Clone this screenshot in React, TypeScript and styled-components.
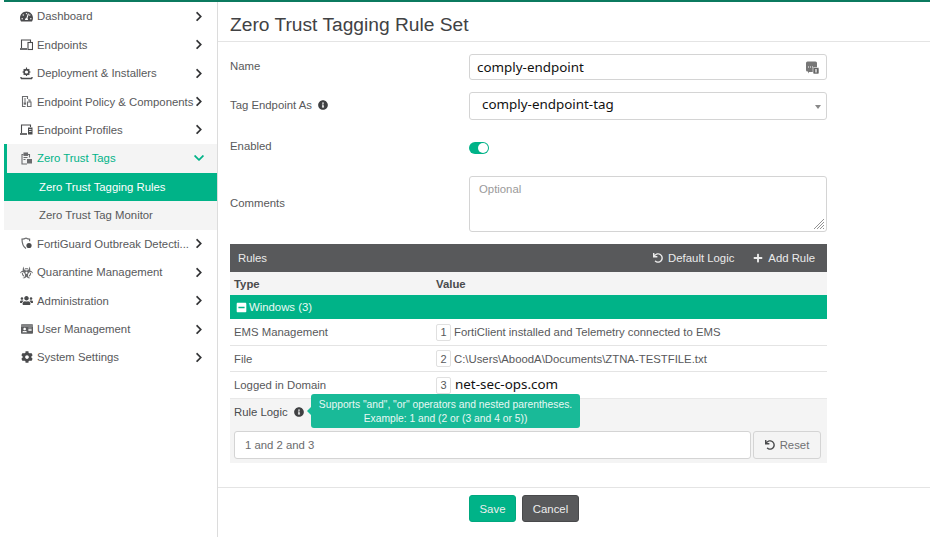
import React from "react";
import styled, { createGlobalStyle } from "styled-components";
import {
  FaTachometerAlt, FaChevronRight, FaChevronDown, FaInfoCircle, FaUndo, FaPlus, FaMinusSquare,
  FaUsers, FaCog, FaBiohazard, FaIdCard,
} from "react-icons/fa";

const Global = createGlobalStyle`
  html, body { margin: 0; padding: 0; background: #fff; }
  body { font-family: "Liberation Sans", Arial, sans-serif; font-size: 11.35px; color: #58595b; }
`;

const Page = styled.div`
  width: 926px; height: 537px; margin-left: 4px; display: flex; flex-direction: column; overflow: hidden;
`;
const TopBar = styled.div`height: 2px; background: #0b7a5f; flex: none;`;
const Body = styled.div`flex: 1; display: flex; min-height: 0;`;
const Sidebar = styled.nav`
  width: 213px; flex: none; border-right: 1px solid #dcdcdc; padding-top: 0;
`;
const NavRow = styled.div<{ $active?: boolean }>`
  height: 28.45px; display: flex; align-items: center; box-sizing: border-box;
  padding-left: ${p => (p.$active ? 13 : 16)}px; padding-right: 13px;
  background: ${p => (p.$active ? "#f4f4f4" : "transparent")};
  border-left: ${p => (p.$active ? "3px solid #00b388" : "0")};
  color: ${p => (p.$active ? "#00b388" : "#58595b")};
`;
const NavIcon = styled.span`
  width: 13px; height: 13px; margin-right: 4px; display: flex; align-items: center; justify-content: center; color: #4a4b4d; flex: none;
  svg { display: block; }
`;
const NavLabel = styled.span`flex: 1; white-space: nowrap; overflow: hidden;`;
const Chevron = styled.span<{ $open?: boolean }>`
  width: 10px; display: flex; justify-content: center; color: ${p => (p.$open ? "#00b388" : "#333436")}; flex: none;
`;
const SubRow = styled.div<{ $selected?: boolean }>`
  height: 28.45px; display: flex; align-items: center; padding-left: 35px;
  background: ${p => (p.$selected ? "#00b388" : "#f4f4f4")};
  color: ${p => (p.$selected ? "#fff" : "#58595b")};
`;
const Main = styled.main`flex: 1; min-width: 0; display: flex; flex-direction: column;`;
const Title = styled.h1`
  margin: 0; height: 40px; box-sizing: border-box; border-bottom: 1px solid #e4e4e4;
  padding: 12px 0 0 12px; font-weight: 400; font-size: 19.2px; line-height: 22px; color: #414244;
`;
const Content = styled.div`padding: 12px 0 0 12px; width: 597px; box-sizing: content-box;`;
const FormRow = styled.div<{ $gap?: number }>`
  display: grid; grid-template-columns: 239px 358px; align-items: center; margin-bottom: ${p => p.$gap ?? 12}px;
`;
const FieldLabel = styled.label`display: flex; align-items: center; gap: 6px; padding-bottom: 3px; color: #58595b;`;
const Field = styled.div<{ $h: number }>`
  height: ${p => p.$h}px; box-sizing: border-box; border: 1px solid #d4d4d4; border-radius: 3px; background: #fff;
  display: flex; align-items: center; position: relative;
`;
const Typed = styled.span<{ $pad: number; $lift?: number }>`
  font-family: "Noto Sans", sans-serif; font-size: 13.4px; color: #111; padding-left: ${p => p.$pad}px; flex: 1;
  margin-top: ${p => -(p.$lift ?? 0)}px;
`;
const FieldIcon = styled.span`position: absolute; right: 6px; top: 5px; display: flex;`;
const Caret = styled.span`
  position: absolute; right: 5px; top: 12px; width: 0; height: 0;
  border-left: 3px solid transparent; border-right: 3px solid transparent; border-top: 4px solid #888;
`;
const Toggle = styled.div`
  width: 20px; height: 12px; border-radius: 6px; background: #00b388; position: relative;
  &::after { content: ""; position: absolute; right: 1px; top: 1px; width: 10px; height: 10px; border-radius: 50%; background: #fff; }
`;
const Comment = styled.div`
  height: 56px; box-sizing: border-box; border: 1px solid #d4d4d4; border-radius: 3px; padding: 6px 9px; color: #9a9a9a; position: relative;
`;
const Grip = styled.svg`position: absolute; right: 1px; bottom: 1px;`;
const RulesBar = styled.div`
  height: 28px; background: #58595b; color: #ebebeb; display: flex; align-items: center; padding: 0 12px 0 8px;
`;
const RulesTitle = styled.span`flex: 1;`;
const BarAction = styled.span`display: inline-flex; align-items: center; gap: 5px; margin-left: 19px;`;
const Cols = styled.div`
  display: grid; grid-template-columns: 202px 1fr; height: 23px; align-items: center; background: #f4f4f4;
  padding-left: 4px; font-weight: 700; color: #4a4b4d;
`;
const Group = styled.div`
  height: 24px; background: #00b388; color: #eafaf5; display: flex; align-items: center; gap: 2px; padding-left: 6px;
`;
const Row = styled.div<{ $h: number; $last?: boolean }>`
  display: grid; grid-template-columns: 202px 1fr; height: ${p => p.$h}px; box-sizing: border-box; align-items: center; padding-left: 4px;
  border-bottom: ${p => (p.$last ? "0" : "1px solid #e4e4e4")}; white-space: nowrap;
`;
const Value = styled.div`display: flex; align-items: center; gap: 3px;`;
const Badge = styled.span`
  width: 15px; height: 17px; box-sizing: border-box; border: 1px solid #e0e0e0; border-radius: 2px; background: #fff;
  display: flex; align-items: center; justify-content: center; font-size: 11px; color: #58595b;
`;
const DomainText = styled.span`
  font-family: "Noto Sans", sans-serif; font-size: 13.4px; color: #111; line-height: 16px; margin: -3px 0 0 1px;
`;
const LogicPanel = styled.div`
  height: 65px; box-sizing: border-box; background: #f4f4f4; border-top: 1px solid #e8e8e8; padding: 0 6px 0 4px; position: relative;
`;
const LogicLabel = styled.div`
  height: 32px; display: flex; align-items: center; gap: 6px; color: #4a4b4d; padding: 1px 0 7px; box-sizing: border-box;
`;
const LogicRow = styled.div`display: flex; gap: 2px;`;
const LogicInput = styled.div`
  flex: 1; height: 28px; box-sizing: border-box; border: 1px solid #d4d4d4; border-radius: 3px; background: #fff;
  display: flex; align-items: center; padding-left: 10px; color: #6a6b6d;
`;
const ResetButton = styled.div`
  width: 68px; height: 28px; box-sizing: border-box; border: 1px solid #d4d4d4; border-radius: 3px; background: #f4f4f4;
  display: flex; align-items: center; justify-content: center; gap: 5px; color: #707173;
`;
const Tip = styled.div`
  position: absolute; left: 81px; top: -5px; width: 269px; height: 34px; background: #19ba98; color: #e8f8f4; border-radius: 3px;
  font-size: 10.3px; line-height: 14px; text-align: center; padding-top: 4px; box-sizing: border-box; white-space: nowrap;
  &::before {
    content: ""; position: absolute; left: -4px; top: 13px; border-top: 4px solid transparent; border-bottom: 4px solid transparent; border-right: 4px solid #19ba98;
  }
`;
const Footer = styled.div`
  margin-top: 24px; border-top: 1px solid #e4e4e4; padding: 7px 0 0 251px; display: flex; gap: 6px;
`;
const Btn = styled.button<{ $primary?: boolean }>`
  height: 27px; width: ${p => (p.$primary ? 47 : 57)}px; border: 1px solid ${p => (p.$primary ? "#00a87f" : "#48494b")}; border-radius: 3px;
  background: ${p => (p.$primary ? "#00b388" : "#58595b")}; color: #eee; font: 11.4px "Liberation Sans", Arial, sans-serif; padding: 0;
`;

const Laptop = () => (
  <svg width="13" height="13" viewBox="0 0 13 13" fill="none" stroke="currentColor" strokeWidth="1.1">
    <path d="M1.500 10V2h9v2" /><path d="M0 11h7" strokeWidth="1.600" /><rect x="8" y="4.500" width="4.500" height="7" />
  </svg>
);
const Deploy = () => (
  <svg width="13" height="13" viewBox="0 0 13 13" fill="none" stroke="currentColor">
    <circle cx="6.500" cy="5" r="2.400" strokeWidth="1.600" />
    <path d="M6.500 0.500v1.500M6.500 8v1M2.500 5H4M9 5h1.500M3.700 2.200l1 1M8.300 6.800l1 1M9.300 2.200l-1 1M4.700 6.800l-1 1" strokeWidth="1.100" />
    <path d="M1 11.500h11M1 11.500V10M12 11.500V10" strokeWidth="1.400" />
  </svg>
);
const Policy = () => (
  <svg width="13" height="13" viewBox="0 0 13 13" fill="none" stroke="#6b6c6e" strokeWidth="1.100">
    <path d="M7.500 4V1.500h-5v10h3" /><path d="M4 4h2M4 6h2" /><rect x="3.700" y="7.300" width="2.400" height="2.400" fill="#6b6c6e" stroke="none" />
    <path d="M7.500 7h3.500v4.500H7.500z" /><path d="M8 5h2v2" />
  </svg>
);
const Profile = () => (
  <svg width="13" height="13" viewBox="0 0 13 13" fill="none" stroke="currentColor" strokeWidth="1.100">
    <path d="M1.500 10V2h9v2" /><path d="M0 11h7" strokeWidth="1.600" /><rect x="8" y="4.500" width="4.500" height="7" fill="currentColor" stroke="none" />
    <path d="M9 6.500h2.500M9 8.500h2.500" stroke="#fff" strokeWidth=".8" />
  </svg>
);
const Clip = () => (
  <svg width="13" height="13" viewBox="0 0 13 13" fill="none" stroke="#6b6c6e" strokeWidth="1.100">
    <path d="M3.500 2.500h-1.500v9.500h5" /><path d="M8 2.500h1.500v3" /><rect x="4" y="1" width="3.500" height="2.400" fill="#6b6c6e" />
    <path d="M3.500 5.500h4M3.500 7.500h2" /><rect x="7" y="7" width="5" height="4.500" fill="#6b6c6e" stroke="none" />
  </svg>
);
const Shield = () => (
  <svg width="13" height="13" viewBox="0 0 13 13" fill="none" stroke="#6b6c6e" strokeWidth="1.200">
    <path d="M6 1c-1.300.9-2.600 1.200-4 1.200 0 4.500.8 7.200 4 9.300" /><path d="M6 1c1.300.9 2.200 1.200 3.600 1.200v2" />
    <circle cx="9" cy="8.500" r="2.600" fill="#4a4b4d" stroke="none" />
  </svg>
);
const Counter = () => (
  <svg width="15" height="15" viewBox="0 0 15 15">
    <path d="M1 3a1.500 1.500 0 0 1 1.500-1.500h8A1.500 1.500 0 0 1 12 3v9H4l-1 1.500V11.500H2.500A1.500 1.500 0 0 1 1 10z" fill="#777" />
    <path d="M3 7h1M5 7h1M7 7h1" stroke="#fff" strokeWidth="1" />
    <rect x="8" y="7.500" width="6" height="6.500" rx="1" fill="#666" stroke="#fff" strokeWidth=".6" />
    <path d="M11 9v3.500" stroke="#fff" strokeWidth="1.200" />
  </svg>
);

type NavEntry = { label: string; icon: React.ReactNode };
const top: NavEntry[] = [
  { label: "Dashboard", icon: <FaTachometerAlt size={13} /> },
  { label: "Endpoints", icon: <Laptop /> },
  { label: "Deployment & Installers", icon: <Deploy /> },
  { label: "Endpoint Policy & Components", icon: <Policy /> },
  { label: "Endpoint Profiles", icon: <Profile /> },
];
const rest: NavEntry[] = [
  { label: "FortiGuard Outbreak Detecti...", icon: <Shield /> },
  { label: "Quarantine Management", icon: <FaBiohazard size={13} color="#6b6c6e" /> },
  { label: "Administration", icon: <FaUsers size={15} /> },
  { label: "User Management", icon: <FaIdCard size={12} color="#5c5d5f" /> },
  { label: "System Settings", icon: <FaCog size={12} /> },
];

const Nav = ({ label, icon }: NavEntry) => (
  <NavRow>
    <NavIcon>{icon}</NavIcon>
    <NavLabel>{label}</NavLabel>
    <Chevron><FaChevronRight size={11} /></Chevron>
  </NavRow>
);

export default function App() {
  return (
    <Page>
      <Global />
      <TopBar />
      <Body>
        <Sidebar>
          {top.map(n => <Nav key={n.label} {...n} />)}
          <NavRow $active>
            <NavIcon><Clip /></NavIcon>
            <NavLabel>Zero Trust Tags</NavLabel>
            <Chevron $open><FaChevronDown size={12} /></Chevron>
          </NavRow>
          <SubRow $selected>Zero Trust Tagging Rules</SubRow>
          <SubRow>Zero Trust Tag Monitor</SubRow>
          {rest.map(n => <Nav key={n.label} {...n} />)}
        </Sidebar>
        <Main>
          <Title>Zero Trust Tagging Rule Set</Title>
          <Content>
            <FormRow>
              <FieldLabel>Name</FieldLabel>
              <Field $h={26}><Typed $pad={7}>comply-endpoint</Typed><FieldIcon><Counter /></FieldIcon></Field>
            </FormRow>
            <FormRow $gap={20}>
              <FieldLabel>Tag Endpoint As <FaInfoCircle size={10} color="#3f4042" /></FieldLabel>
              <Field $h={28}><Typed $pad={12} $lift={5}>comply-endpoint-tag</Typed><Caret /></Field>
            </FormRow>
            <FormRow $gap={21}>
              <FieldLabel>Enabled</FieldLabel>
              <Toggle />
            </FormRow>
            <FormRow>
              <FieldLabel>Comments</FieldLabel>
              <Comment>
                Optional
                <Grip width="12" height="12" viewBox="0 0 12 12" stroke="#777" strokeWidth=".8">
                  <path d="M1 11L11 1M4 11l7-7M7 11l4-4M10 11l1-1" />
                </Grip>
              </Comment>
            </FormRow>
            <RulesBar>
              <RulesTitle>Rules</RulesTitle>
              <BarAction><FaUndo size={10} />Default Logic</BarAction>
              <BarAction><FaPlus size={10} />Add Rule</BarAction>
            </RulesBar>
            <Cols><span>Type</span><span>Value</span></Cols>
            <Group><FaMinusSquare size={11} color="#fff" />Windows (3)</Group>
            <Row $h={27}>
              <span>EMS Management</span>
              <Value><Badge>1</Badge>FortiClient installed and Telemetry connected to EMS</Value>
            </Row>
            <Row $h={26}>
              <span>File</span>
              <Value><Badge>2</Badge>C:\Users\AboodA\Documents\ZTNA-TESTFILE.txt</Value>
            </Row>
            <Row $h={26} $last>
              <span>Logged in Domain</span>
              <Value><Badge>3</Badge><DomainText>net-sec-ops.com</DomainText></Value>
            </Row>
            <LogicPanel>
              <LogicLabel>Rule Logic <FaInfoCircle size={10} color="#3f4042" /></LogicLabel>
              <Tip>Supports "and", "or" operators and nested parentheses.<br />Example: 1 and (2 or (3 and 4 or 5))</Tip>
              <LogicRow>
                <LogicInput>1 and 2 and 3</LogicInput>
                <ResetButton><FaUndo size={10} color="#4a4b4d" />Reset</ResetButton>
              </LogicRow>
            </LogicPanel>
          </Content>
          <Footer>
            <Btn $primary>Save</Btn>
            <Btn>Cancel</Btn>
          </Footer>
        </Main>
      </Body>
    </Page>
  );
}
